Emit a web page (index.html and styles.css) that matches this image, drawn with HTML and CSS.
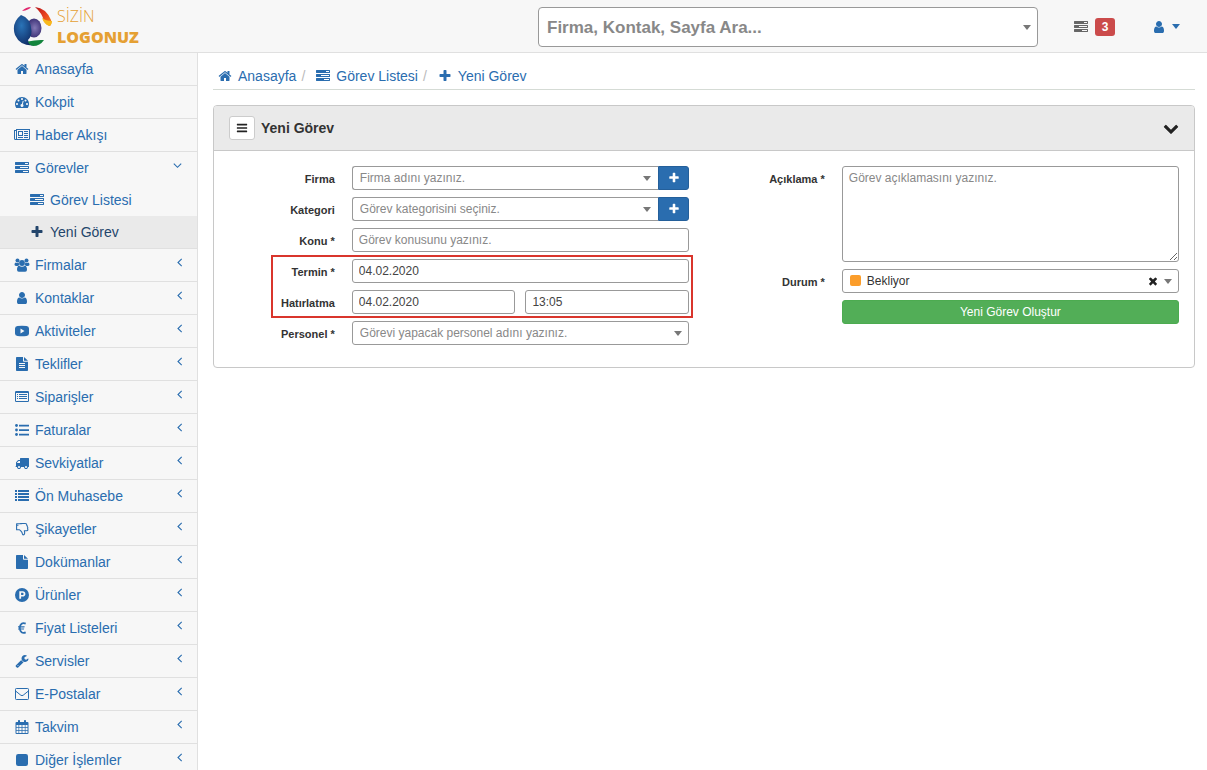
FILE: index.html
```html
<!DOCTYPE html>
<html lang="tr">
<head>
<meta charset="utf-8">
<title>Yeni Görev</title>
<link rel="stylesheet" href="styles.css">
</head>
<body>
<svg class="sprite" aria-hidden="true">
  <symbol id="home" viewBox="0 0 1792 1792"><path d="M1472 992v480q0 26-19 45t-45 19h-384v-384h-256v384h-384q-26 0-45-19t-19-45v-480q0-1 .5-3t.5-3l575-474 575 474q1 2 1 6zm223-69l-62 74q-8 9-21 11h-3q-13 0-21-7l-692-577-692 577q-12 8-24 7-13-2-21-11l-62-74q-8-10-7-23.5t11-21.5l719-599q32-26 76-26t76 26l244 204v-195q0-14 9-23t23-9h192q14 0 23 9t9 23v408l219 182q10 8 11 21.5t-7 23.5z"/></symbol>
  <symbol id="gauge" viewBox="0 0 1792 1792"><path d="M384 1152q0-53-37.5-90.5t-90.5-37.5-90.5 37.5-37.5 90.5 37.5 90.5 90.5 37.5 90.5-37.5 37.5-90.5zm192-448q0-53-37.5-90.5t-90.5-37.5-90.5 37.5-37.5 90.5 37.5 90.5 90.5 37.5 90.5-37.5 37.5-90.5zm428 481l101-382q6-26-7.5-48.5t-38.5-29.5-48 6.5-30 39.5l-101 382q-60 5-107 43.5t-63 98.5q-20 77 20 146t117 89 146-20 89-117q16-60-6-117t-72-91zm660-33q0-53-37.5-90.5t-90.5-37.5-90.5 37.5-37.5 90.5 37.5 90.5 90.5 37.5 90.5-37.5 37.5-90.5zm-640-640q0-53-37.5-90.5t-90.5-37.5-90.5 37.5-37.5 90.5 37.5 90.5 90.5 37.5 90.5-37.5 37.5-90.5zm448 192q0-53-37.5-90.5t-90.5-37.5-90.5 37.5-37.5 90.5 37.5 90.5 90.5 37.5 90.5-37.5 37.5-90.5zm320 448q0 261-141 483-19 29-54 29h-1402q-35 0-54-29-141-221-141-483 0-182 71-348t191-286 286-191 348-71 348 71 286 191 191 286 71 348z"/></symbol>
  <symbol id="news" viewBox="0 0 16 14"><path fill-rule="evenodd" d="M2 1H16V11q0 1-1 1H1.500Q0 12 0 10.500V2h2zM3 2V11h12V2zM1 3v7.500q0 .5.500.500t.5-.5V3zM4 3h5v5H4zM5 4v3h3V4zM10 3h4v1h-4zM10 5h4v1h-4zM10 7h4v1h-4zM4 9h5v1H4zM10 9h4v1h-4z"/></symbol>
  <symbol id="tasks" viewBox="0 0 1792 1792"><path d="M1024 1408h640v-128h-640v128zm-384-512h1024v-128h-1024v128zm640-512h384v-128h-384v128zm512 832v256q0 26-19 45t-45 19h-1664q-26 0-45-19t-19-45v-256q0-26 19-45t45-19h1664q26 0 45 19t19 45zm0-512v256q0 26-19 45t-45 19h-1664q-26 0-45-19t-19-45v-256q0-26 19-45t45-19h1664q26 0 45 19t19 45zm0-512v256q0 26-19 45t-45 19h-1664q-26 0-45-19t-19-45v-256q0-26 19-45t45-19h1664q26 0 45 19t19 45z"/></symbol>
  <symbol id="plus" viewBox="0 0 1792 1792"><path d="M1600 736v192q0 40-28 68t-68 28h-416v416q0 40-28 68t-68 28h-192q-40 0-68-28t-28-68v-416h-416q-40 0-68-28t-28-68v-192q0-40 28-68t68-28h416v-416q0-40 28-68t68-28h192q40 0 68 28t28 68v416h416q40 0 68 28t28 68z"/></symbol>
  <symbol id="bars" viewBox="0 0 1792 1792"><path d="M1664 1344v128q0 26-19 45t-45 19h-1408q-26 0-45-19t-19-45v-128q0-26 19-45t45-19h1408q26 0 45 19t19 45zm0-512v128q0 26-19 45t-45 19h-1408q-26 0-45-19t-19-45v-128q0-26 19-45t45-19h1408q26 0 45 19t19 45zm0-512v128q0 26-19 45t-45 19h-1408q-26 0-45-19t-19-45v-128q0-26 19-45t45-19h1408q26 0 45 19t19 45z"/></symbol>
  <symbol id="user" viewBox="0 0 1792 1792"><path d="M1536 1399q0 109-62.500 187t-150.500 78h-854q-88 0-150.500-78t-62.500-187q0-85 8.500-160.500t31.500-152 58.500-131 94-89 134.500-34.500q131 128 313 128t313-128q76 0 134.500 34.500t94 89 58.500 131 31.500 152 8.500 160.500zm-256-887q0 159-112.500 271.500t-271.500 112.500-271.500-112.500-112.500-271.500 112.500-271.500 271.500-112.500 271.500 112.500 112.500 271.500z"/></symbol>
  <symbol id="users" viewBox="0 0 15 14"><circle cx="3" cy="2.500" r="2"/><circle cx="12" cy="2.500" r="2"/><path d="M1.300 4.400q1.700 1.200 3.200.2Q4 6 5 7.200 3.800 7.300 3.200 8H1.500Q0 8 0 6.600 0 4.600 1.300 4.400zM13.700 4.400q-1.700 1.200-3.200.2.500 1.400-.5 2.600 1.200.1 1.800.8h1.700Q15 8 15 6.600q0-2-1.300-2.200z"/><circle cx="7.500" cy="5" r="2.900"/><path d="M4.600 7.700q2.900 2.300 5.800 0 2.100.3 2.100 4 0 2-1.800 2H4.300q-1.800 0-1.800-2 0-3.700 2.100-4z"/></symbol>
  <symbol id="video" viewBox="0 0 14 14"><path fill-rule="evenodd" d="M2.500 2q4.500-.4 9 0Q14 2.200 14 4.500v5q0 2.300-2.500 2.500-4.500.4-9 0Q0 11.800 0 9.500v-5Q0 2.200 2.500 2zM5.500 4.600v4.800l4-2.400z"/></symbol>
  <symbol id="filetext" viewBox="0 0 14 14"><path fill-rule="evenodd" d="M1.800 0H8v4q0 .8.800.8H13v8.400q0 .8-.8.8H1.800q-.8 0-.8-.8V.8Q1 0 1.800 0zM9 0l4 3.800H9zM4 6v1h6V6zM4 8v1h6V8zM4 10v1h6v-1z"/></symbol>
  <symbol id="listalt" viewBox="0 0 14 14"><path fill-rule="evenodd" d="M1.200 1h11.600Q14 1 14 2.200v8.600q0 1.200-1.200 1.200H1.200Q0 12 0 10.800V2.200Q0 1 1.200 1zM1 3v7.700q0 .3.300.3h11.400q.3 0 .3-.3V3zM2 4h1v1H2zM4 4h8v1H4zM2 6h1v1H2zM4 6h8v1H4zM2 8h1v1H2zM4 8h8v1H4z"/></symbol>
  <symbol id="listul" viewBox="0 0 14 14"><circle cx="1.500" cy="2.500" r="1.400"/><circle cx="1.500" cy="7" r="1.400"/><circle cx="1.500" cy="11.500" r="1.400"/><path d="M4 1.700h10v1.700H4zM4 6.200h10v1.700H4zM4 10.700h10v1.700H4z"/></symbol>
  <symbol id="list" viewBox="0 0 14 14"><path d="M0 1h2v2H0zM3 1h11v2H3zM0 4h2v2H0zM3 4h11v2H3zM0 7h2v2H0zM3 7h11v2H3zM0 10h2v2H0zM3 10h11v2H3z"/></symbol>
  <symbol id="truck" viewBox="0 0 1792 1792"><path d="M640 1408q0-52-38-90t-90-38-90 38-38 90 38 90 90 38 90-38 38-90zm-384-512h384v-256h-158q-13 0-22 9l-195 195q-9 9-9 22v30zm1280 512q0-52-38-90t-90-38-90 38-38 90 38 90 90 38 90-38 38-90zm256-1088v1024q0 15-4 26.500t-13.500 18.500-16.500 11.500-23.500 6-22.500 2-25.500 0-22.500-.5q0 106-75 181t-181 75-181-75-75-181h-384q0 106-75 181t-181 75-181-75-75-181h-64q-3 0-22.500.5t-25.500 0-22.500-2-23.500-6-16.500-11.500-13.500-18.500-4-26.500q0-26 19-45t45-19v-320q0-8-.5-35t0-38 2.500-34.500 6.500-37 14-30.500 22.500-30l198-198q19-19 50.500-32t58.500-13h160v-192q0-26 19-45t45-19h1024q26 0 45 19t19 45z"/></symbol>
  <symbol id="thumb" viewBox="0 0 14 14"><path fill="none" stroke="currentColor" stroke-width="1.100" stroke-linejoin="round" d="M4.300 1.800H1.600v6h2.700C5.800 8.300 6 9.300 6.800 10.200c.7.800.4 2.700 1.300 2.700 2 0 1.700-2.500 1.200-4.200h2.400c1.300 0 1.500-1.300.8-1.900.5-.7.400-1.500-.2-1.900.3-.8 0-1.400-.6-1.700.1-1-.5-1.700-1.500-1.700H7.700c-1.500 0-2 .3-3.400.3z"/><circle cx="2.800" cy="3.200" r=".7"/></symbol>
  <symbol id="file" viewBox="0 0 14 14"><path d="M1.800 0H8v4q0 .8.800.8H13v8.400q0 .8-.8.8H1.800q-.8 0-.8-.8V.8Q1 0 1.800 0zM9 0l4 3.800H9z"/></symbol>
  <symbol id="product" viewBox="0 0 14 14"><path fill-rule="evenodd" d="M7 0a7 7 0 1 1 0 14A7 7 0 0 1 7 0zM4.300 3.300v7.400h1.800V8.500h1.600c1.700 0 2.700-1.100 2.700-2.600s-1-2.600-2.700-2.600zM6.100 4.800h1.300c.8 0 1.200.4 1.200 1.100S8.200 7 7.400 7H6.100z"/></symbol>
  <symbol id="euro" viewBox="0 0 14 14"><path fill="none" stroke="currentColor" stroke-width="1.700" d="M10.700 2.600C7.500 1.200 4.800 3 4.800 7s2.700 5.800 5.900 4.400"/><path d="M3 5.300h6.700l-.3 1.100H3zM3 7.500h6.200L8.900 8.600H3z"/></symbol>
  <symbol id="wrench" viewBox="0 0 1792 1792"><path d="M448 1472q0-26-19-45t-45-19-45 19-19 45 19 45 45 19 45-19 19-45zm644-420l-682 682q-37 37-90 37-52 0-91-37l-106-108q-38-36-38-90 0-53 38-91l681-681q39 98 114.500 173.500t173.500 114.500zm634-435q0 39-23 106-47 134-164.500 217.500t-258.500 83.500q-185 0-316.500-131.500t-131.500-316.500 131.500-316.500 316.500-131.500q58 0 121.500 16.500t107.500 46.500q16 11 16 28t-16 28l-293 169v224l193 107q5-3 79-48.500t135.500-81 70.500-35.500q15 0 23.500 10t8.500 25z"/></symbol>
  <symbol id="mail" viewBox="0 0 14 14"><g fill="none" stroke="currentColor"><rect x=".5" y="1.500" width="13" height="11" rx=".8"/><path d="M.8 4.200l5 4q1.200.9 2.400 0l5-4"/></g></symbol>
  <symbol id="calendar" viewBox="0 0 14 14"><path fill-rule="evenodd" d="M1.500 2H3V.8q0-.8.800-.8h.4q.8 0 .8.800V2h4V.8q0-.8.800-.8h.4q.8 0 .8.800V2h1.500q1 0 1 1v10q0 1-1 1h-11q-1 0-1-1V3q0-1 1-1zM1.500 5v2h2V5zM4.200 5v2h2.400V5zM7.400 5v2h2.400V5zM10.500 5v2h2V5zM1.500 7.700v2.300h2V7.700zM4.200 7.700v2.300h2.400V7.700zM7.400 7.700v2.300h2.400V7.700zM10.500 7.700v2.300h2V7.700zM1.500 10.800V13h2v-2.200zM4.200 10.800V13h2.400v-2.200zM7.400 10.800V13h2.400v-2.200zM10.500 10.800V13h2v-2.200z"/></symbol>
  <symbol id="square" viewBox="0 0 14 14"><rect x="1" y="1" width="12" height="12" rx="2.200"/></symbol>
  <symbol id="left" viewBox="0 0 9 9"><path fill="none" stroke="currentColor" stroke-width="1.100" d="M6.700.8L3 4.500l3.700 3.700"/></symbol>
  <symbol id="down" viewBox="0 0 9 9"><path fill="none" stroke="currentColor" stroke-width="1.100" d="M.8 2.600l3.700 3.700 3.700-3.700"/></symbol>
  <symbol id="chevron" viewBox="0 0 1792 1792"><path d="M1683 808l-742 741q-19 19-45 19t-45-19l-742-741q-19-19-19-45.500t19-45.500l166-165q19-19 45-19t45 19l531 531 531-531q19-19 45-19t45 19l166 165q19 19 19 45.500t-19 45.500z"/></symbol>
  <symbol id="times" viewBox="0 0 1792 1792"><path d="M1490 1322q0 40-28 68l-136 136q-28 28-68 28t-68-28l-294-294-294 294q-28 28-68 28t-68-28l-136-136q-28-28-28-68t28-68l294-294-294-294q-28-28-28-68t28-68l136-136q28-28 68-28t68 28l294 294 294-294q28-28 68-28t68 28l136 136q28 28 28 68t-28 68l-294 294 294 294q28 28 28 68z"/></symbol>
</svg>

<header class="topbar">
  <a class="brand" href="#">
    <svg class="brand-mark" viewBox="0 0 40 40" aria-hidden="true">
      <defs>
        <radialGradient id="gb" cx=".4" cy=".35" r=".7"><stop offset="0" stop-color="#2a74b8"/><stop offset="1" stop-color="#0f2c66"/></radialGradient>
        <radialGradient id="gp" cx=".55" cy=".5" r=".6"><stop offset="0" stop-color="#8378b5"/><stop offset="1" stop-color="#33286e"/></radialGradient>
        <linearGradient id="gr" x1="0" y1="0" x2="1" y2="1"><stop offset="0" stop-color="#b3141c"/><stop offset=".5" stop-color="#e8401f"/><stop offset="1" stop-color="#f58a1c"/></linearGradient>
      </defs>
      <path d="M9 5Q13 1 18 1q-2 3-9 4z" fill="#e0286e"/>
      <path d="M22 1q11 1 16 13 1 4-1 6-4-1-6-5-2-8-9-14z" fill="url(#gr)"/>
      <path d="M29 12q4 3 10 3 0 4-3 5-5-2-7-8z" fill="#f7b91c"/>
      <ellipse cx="21" cy="22" rx="7.500" ry="9.500" fill="url(#gp)"/>
      <path d="M8 9Q18 12 18.500 25q0 6-3.500 9 1 4 5 5.500Q7 40 2 29-2 17 8 9z" fill="url(#gb)"/>
      <path d="M15 35.500q8-2 16-1.500-4 6-11 6-4-1-5-4.500z" fill="#12843c"/>
    </svg>
    <span class="brand-text"><span class="brand-light">SİZİN</span><span class="brand-bold">LOGONUZ</span></span>
  </a>
  <span class="select search">
    <select aria-label="Firma, Kontak, Sayfa Ara"><option>Firma, Kontak, Sayfa Ara...</option></select>
  </span>
  <nav class="tools" aria-label="Hesap">
    <a class="tasks-link" href="#" aria-label="Görevler"><svg class="icon"><use href="#tasks"/></svg><span class="badge">3</span></a>
    <a class="user-link" href="#" aria-label="Kullanıcı"><svg class="icon"><use href="#user"/></svg><span class="caret"></span></a>
  </nav>
</header>

<div class="layout">
  <nav class="sidebar" aria-label="Menü">
    <ul class="menu">
      <li><a href="#"><svg class="icon"><use href="#home"/></svg>Anasayfa</a></li>
      <li><a href="#"><svg class="icon"><use href="#gauge"/></svg>Kokpit</a></li>
      <li><a href="#"><svg class="icon wide"><use href="#news"/></svg>Haber Akışı</a></li>
      <li><a href="#"><svg class="icon"><use href="#tasks"/></svg>Görevler<svg class="arrow"><use href="#down"/></svg></a>
        <ul class="submenu">
          <li><a href="#"><svg class="icon"><use href="#tasks"/></svg>Görev Listesi</a></li>
          <li><a class="active" href="#"><svg class="icon"><use href="#plus"/></svg>Yeni Görev</a></li>
        </ul>
      </li>
      <li><a href="#"><svg class="icon wide"><use href="#users"/></svg>Firmalar<svg class="arrow closed"><use href="#left"/></svg></a></li>
      <li><a href="#"><svg class="icon"><use href="#user"/></svg>Kontaklar<svg class="arrow closed"><use href="#left"/></svg></a></li>
      <li><a href="#"><svg class="icon"><use href="#video"/></svg>Aktiviteler<svg class="arrow closed"><use href="#left"/></svg></a></li>
      <li><a href="#"><svg class="icon"><use href="#filetext"/></svg>Teklifler<svg class="arrow closed"><use href="#left"/></svg></a></li>
      <li><a href="#"><svg class="icon"><use href="#listalt"/></svg>Siparişler<svg class="arrow closed"><use href="#left"/></svg></a></li>
      <li><a href="#"><svg class="icon"><use href="#listul"/></svg>Faturalar<svg class="arrow closed"><use href="#left"/></svg></a></li>
      <li><a href="#"><svg class="icon"><use href="#truck"/></svg>Sevkiyatlar<svg class="arrow closed"><use href="#left"/></svg></a></li>
      <li><a href="#"><svg class="icon"><use href="#list"/></svg>Ön Muhasebe<svg class="arrow closed"><use href="#left"/></svg></a></li>
      <li><a href="#"><svg class="icon"><use href="#thumb"/></svg>Şikayetler<svg class="arrow closed"><use href="#left"/></svg></a></li>
      <li><a href="#"><svg class="icon"><use href="#file"/></svg>Dokümanlar<svg class="arrow closed"><use href="#left"/></svg></a></li>
      <li><a href="#"><svg class="icon"><use href="#product"/></svg>Ürünler<svg class="arrow closed"><use href="#left"/></svg></a></li>
      <li><a href="#"><svg class="icon"><use href="#euro"/></svg>Fiyat Listeleri<svg class="arrow closed"><use href="#left"/></svg></a></li>
      <li><a href="#"><svg class="icon"><use href="#wrench"/></svg>Servisler<svg class="arrow closed"><use href="#left"/></svg></a></li>
      <li><a href="#"><svg class="icon"><use href="#mail"/></svg>E-Postalar<svg class="arrow closed"><use href="#left"/></svg></a></li>
      <li><a href="#"><svg class="icon"><use href="#calendar"/></svg>Takvim<svg class="arrow closed"><use href="#left"/></svg></a></li>
      <li><a href="#"><svg class="icon"><use href="#square"/></svg>Diğer İşlemler<svg class="arrow closed"><use href="#left"/></svg></a></li>
    </ul>
  </nav>

  <main class="content">
    <ol class="breadcrumb">
      <li><a href="#"><svg class="icon"><use href="#home"/></svg>Anasayfa</a></li>
      <li><a href="#"><svg class="icon"><use href="#tasks"/></svg>Görev Listesi</a></li>
      <li><a href="#"><svg class="icon"><use href="#plus"/></svg>Yeni Görev</a></li>
    </ol>

    <section class="panel">
      <div class="panel-head">
        <button class="menu-button" type="button" aria-label="Menü"><svg class="icon"><use href="#bars"/></svg></button>
        <h1>Yeni Görev</h1>
        <button class="collapse" type="button" aria-label="Daralt"><svg class="icon"><use href="#chevron"/></svg></button>
      </div>
      <form class="panel-body">
        <div class="column">
          <div class="field">
            <label for="firma">Firma</label>
            <div class="group">
              <span class="select"><select id="firma"><option>Firma adını yazınız.</option></select></span>
              <button class="add" type="button" aria-label="Firma ekle"><svg class="icon"><use href="#plus"/></svg></button>
            </div>
          </div>
          <div class="field">
            <label for="kategori">Kategori</label>
            <div class="group">
              <span class="select"><select id="kategori"><option>Görev kategorisini seçiniz.</option></select></span>
              <button class="add" type="button" aria-label="Kategori ekle"><svg class="icon"><use href="#plus"/></svg></button>
            </div>
          </div>
          <div class="field">
            <label for="konu">Konu *</label>
            <input id="konu" type="text" placeholder="Görev konusunu yazınız.">
          </div>
          <div class="highlight">
            <div class="field">
              <label for="termin">Termin *</label>
              <input id="termin" type="text" value="04.02.2020">
            </div>
            <div class="field">
              <label for="hatirlatma">Hatırlatma</label>
              <div class="pair">
                <input id="hatirlatma" type="text" value="04.02.2020">
                <input type="text" value="13:05" aria-label="Hatırlatma saati">
              </div>
            </div>
          </div>
          <div class="field">
            <label for="personel">Personel *</label>
            <span class="select"><select id="personel"><option>Görevi yapacak personel adını yazınız.</option></select></span>
          </div>
        </div>
        <div class="column">
          <div class="field">
            <label for="aciklama">Açıklama *</label>
            <textarea id="aciklama" placeholder="Görev açıklamasını yazınız."></textarea>
          </div>
          <div class="field">
            <label for="durum">Durum *</label>
            <span class="select status">
              <select id="durum"><option>Bekliyor</option></select>
              <button class="clear" type="button" aria-label="Temizle"><svg class="icon"><use href="#times"/></svg></button>
            </span>
          </div>
          <div class="field">
            <button class="submit" type="submit">Yeni Görev Oluştur</button>
          </div>
        </div>
      </form>
    </section>
  </main>
</div>
</body>
</html>
```
FILE: styles.css
```css
* {
  box-sizing: border-box;
}

body {
  display: flex;
  flex-direction: column;
  height: 100vh;
  margin: 0;
  background: #fff;
  color: #333;
  font: 14px/20px "Liberation Sans", Arial, sans-serif;
}

a {
  color: #2a6daf;
  text-decoration: none;
}

ul,
ol {
  margin: 0;
  padding: 0;
  list-style: none;
}

input,
select,
textarea,
button {
  margin: 0;
  font-family: inherit;
}

.sprite {
  position: absolute;
  width: 0;
  height: 0;
}

.icon {
  flex: none;
  width: 14px;
  height: 14px;
  fill: currentColor;
}

.icon.wide {
  width: 16px;
  margin: 0 -1px;
}

/* Top bar */
.topbar {
  display: flex;
  flex: none;
  align-items: center;
  height: 53px;
  padding: 1px 27px 0 13px;
  border-bottom: 1px solid #e0e0e0;
  background: #f7f7f7;
}

.brand {
  display: flex;
  gap: 4px;
  color: #e5a033;
  font-family: "Open Sans", sans-serif;
}

.brand-mark {
  width: 40px;
  height: 40px;
}

.brand-text {
  display: flex;
  flex-direction: column;
}

.brand-light {
  font-size: 16px;
  font-weight: 300;
  line-height: 21px;
}

.brand-bold {
  font-size: 16px;
  font-weight: 800;
  line-height: 21px;
}

.search {
  flex: 0 1 500px;
  margin-left: auto;
}

.tools {
  display: flex;
  align-items: center;
  gap: 37px;
  margin-left: 36px;
}

.tasks-link,
.user-link {
  display: flex;
  align-items: center;
  gap: 7px;
}

.tasks-link {
  color: #666;
}

.badge {
  width: 20px;
  border-radius: 3px;
  background: #cb4b4b;
  color: #fff;
  font-size: 12px;
  font-weight: bold;
  line-height: 18px;
  text-align: center;
}

.user-link {
  gap: 6px;
}

.caret {
  border: 4px solid transparent;
  border-top: 5px solid;
  border-bottom: 0;
}

/* Sidebar */
.layout {
  display: flex;
  flex: 1;
  min-height: 0;
}

.sidebar {
  flex: none;
  width: 198px;
  overflow-y: auto;
  border-right: 1px solid #e0e0e0;
  background: #f7f7f7;
  scrollbar-width: none;
}

.menu > li {
  border-bottom: 1px solid #e0e0e0;
}

.menu a {
  display: flex;
  align-items: center;
  gap: 6px;
  height: 32px;
  padding: 0 15px;
}

.submenu a {
  padding-left: 30px;
}

.menu .active {
  background: #eaeaea;
  color: #23456b;
}

.arrow {
  width: 9px;
  height: 9px;
  margin-bottom: 5px;
  margin-left: auto;
}

.arrow.closed {
  margin-right: -2px;
}

/* Content */
.content {
  flex: 1;
  min-width: 0;
  padding: 13px 12px 0 15px;
}

.breadcrumb {
  display: flex;
  height: 24px;
  margin-bottom: 15px;
  padding-left: 5px;
  border-bottom: 1px solid #d5dbd5;
}

.breadcrumb li {
  display: flex;
}

.breadcrumb li + li::before {
  content: "/";
  padding: 0 11px 0 5px;
  color: #bbb;
}

.breadcrumb a {
  display: flex;
  gap: 6px;
}

.breadcrumb .icon {
  margin-top: 3px;
}

.panel {
  border: 1px solid #c8c8c8;
  border-radius: 4px;
  overflow: hidden;
}

.panel-head {
  display: flex;
  align-items: center;
  gap: 6px;
  height: 45px;
  padding: 0 15px;
  border-bottom: 1px solid #c8c8c8;
  background: #eaeaea;
}

.panel-head h1 {
  margin: 0;
  font-size: 14px;
}

.menu-button {
  display: grid;
  place-items: center;
  width: 26px;
  height: 24px;
  padding: 0;
  border: 1px solid #ccc;
  border-radius: 3px;
  background: #fff;
  color: #222;
}

.menu-button .icon {
  width: 12px;
  height: 12px;
}

.collapse {
  display: flex;
  margin-left: auto;
  padding: 0;
  border: 0;
  background: none;
  color: #222;
}

.collapse .icon {
  width: 16px;
  height: 16px;
}

.panel-body {
  display: grid;
  grid-template-columns: 1fr 1fr;
  gap: 30px;
  padding: 15px 15px 22px;
}

.column,
.highlight {
  display: flex;
  flex-direction: column;
  gap: 7px;
}

.field {
  display: grid;
  grid-template-columns: 23% 1fr;
  column-gap: 17px;
}

.field label {
  padding-top: 3px;
  font-size: 11px;
  font-weight: bold;
  text-align: right;
}

.highlight {
  position: relative;
}

.highlight::after {
  content: "";
  position: absolute;
  inset: -4px -4px -4px 42px;
  border: 2px solid #d9352c;
  pointer-events: none;
}

.field input,
.field textarea,
.select select {
  display: block;
  width: 100%;
  min-width: 0;
  height: 24px;
  border: 1px solid #999;
  border-radius: 3px;
  outline: 0;
  background: #fff;
  color: #444;
  font-size: 12px;
}

.field input {
  padding: 0 6px 1px;
}

.field textarea {
  height: 96px;
  padding: 3px 6px;
  line-height: 16px;
}

.field ::placeholder {
  color: #888;
}

.select {
  display: block;
  position: relative;
  min-width: 0;
}

.select select {
  padding: 0 24px 1px 7px;
  appearance: none;
  color: #888;
}

.select::after {
  content: "";
  position: absolute;
  top: 50%;
  right: 7px;
  margin-top: -2px;
  border: 4px solid transparent;
  border-top: 5px solid #777;
  border-bottom: 0;
  pointer-events: none;
}

.search select {
  height: 40px;
  padding: 1px 24px 0 8px;
  border-radius: 4px;
  font-size: 17px;
  font-weight: bold;
}

.group {
  display: flex;
}

.group .select {
  flex: 1;
}

.group select {
  border-right: 0;
  border-radius: 3px 0 0 3px;
}

.add {
  display: grid;
  place-items: center;
  width: 31px;
  height: 24px;
  padding: 0;
  border: 1px solid #245f9a;
  border-radius: 0 3px 3px 0;
  background: #2a6daf;
  color: #fff;
}

.add .icon {
  width: 12px;
  height: 12px;
}

.pair {
  display: grid;
  grid-template-columns: 1fr 1fr;
  gap: 10px;
}

.status select {
  padding-left: 24px;
  color: #333;
}

.status::before {
  content: "";
  position: absolute;
  top: 6px;
  left: 8px;
  width: 11px;
  height: 11px;
  border-radius: 2px;
  background: #fb9d2b;
}

.clear {
  display: flex;
  position: absolute;
  top: 6px;
  right: 20px;
  padding: 0;
  border: 0;
  background: none;
  color: #222;
}

.clear .icon {
  width: 12px;
  height: 12px;
}

.submit {
  grid-column: 2;
  height: 24px;
  padding: 0;
  border: 1px solid #4cab50;
  border-radius: 3px;
  background: #52ae57;
  color: #fff;
  font-size: 12px;
}
```
